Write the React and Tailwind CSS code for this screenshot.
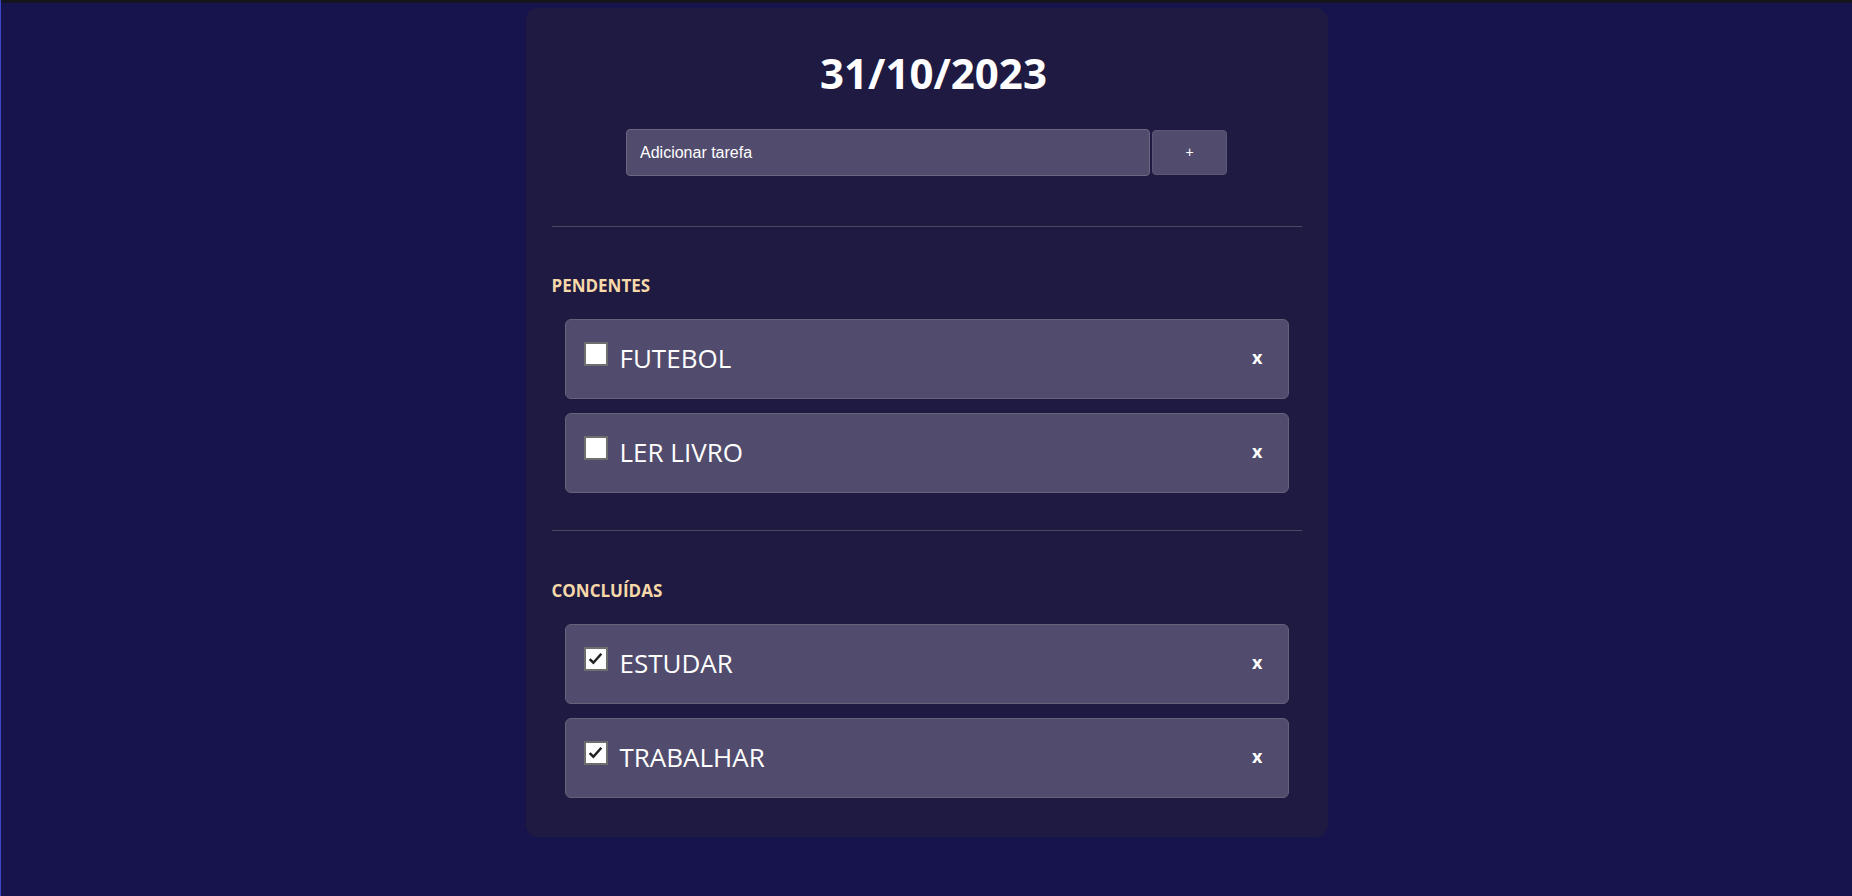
import React from "react";

const pendentes = ["FUTEBOL", "LER LIVRO"];
const concluidas = ["ESTUDAR", "TRABALHAR"];

function Checkbox({ checked }) {
  return (
    <span className="mb-[11px] flex h-[24px] w-[24px] shrink-0 items-center justify-center border-[2px] border-[#6e6e6e] bg-white">
      {checked && (
        <svg width="17" height="17" viewBox="0 0 16 16">
          <path
            d="M2.5 8.5 L6 12 L13.5 3.5"
            fill="none"
            stroke="#222"
            strokeWidth="2.4"
          />
        </svg>
      )}
    </span>
  );
}

function TaskItem({ name, checked }) {
  return (
    <li className="flex h-[80px] items-center rounded-[6px] border border-[#66627a] bg-[#514c6d] pl-[18px] pr-[25px]">
      <Checkbox checked={checked} />
      <span className="mb-[2px] ml-[12px] flex-1 text-[26px] leading-none text-white">
        {name}
      </span>
      <button className="mb-[4px] text-[18px] font-bold leading-none text-white">
        x
      </button>
    </li>
  );
}

function Section({ title, items, checked, gap }) {
  return (
    <section>
      <h2 className={`${gap} text-[17px] font-bold leading-[23px] text-[#f7d8a9]`}>
        {title}
      </h2>
      <ul className="mt-[22px] flex flex-col gap-[14px] px-[13px]">
        {items.map((t) => (
          <TaskItem key={t} name={t} checked={checked} />
        ))}
      </ul>
    </section>
  );
}

export default function App() {
  return (
    <div
      className="min-h-screen border-l border-[#3a45c8] bg-[#17134d]"
      style={{ fontFamily: '"Open Sans", sans-serif' }}
    >
      <div className="h-[3px] bg-[#14141f]" />
      <div className="flex justify-center pt-[5px]">
        <div className="w-[802px] rounded-[12px] bg-[#1e1a41] px-[26px] pt-[36px] pb-[39px]">
          <h1 className="pl-[14px] text-center text-[42px] font-bold leading-[57px] text-white">
            31/10/2023
          </h1>
          <div className="mt-[28px] flex justify-center">
            <input
              type="text"
              placeholder="Adicionar tarefa"
              className="h-[47px] w-[524px] rounded-[4px] border border-[#6a6780] bg-[#514c6d] px-[13px] text-[16px] text-white placeholder:text-white focus:outline-none"
              style={{ fontFamily: '"Liberation Sans", Arial, sans-serif' }}
            />
            <button
              className="ml-[2px] mt-[1px] h-[45px] w-[75px] rounded-[4px] border border-[#5c5873] bg-[#514c6d] text-[14px] text-white"
              style={{ fontFamily: '"Liberation Sans", Arial, sans-serif' }}
            >
              +
            </button>
          </div>
          <div className="mt-[50px] h-px bg-[#4b4862]" />
          <Section title="PENDENTES" items={pendentes} checked={false} gap="mt-[47px]" />
          <div className="mt-[37px] h-px bg-[#4b4862]" />
          <Section title="CONCLUÍDAS" items={concluidas} checked={true} gap="mt-[48px]" />
        </div>
      </div>
    </div>
  );
}
